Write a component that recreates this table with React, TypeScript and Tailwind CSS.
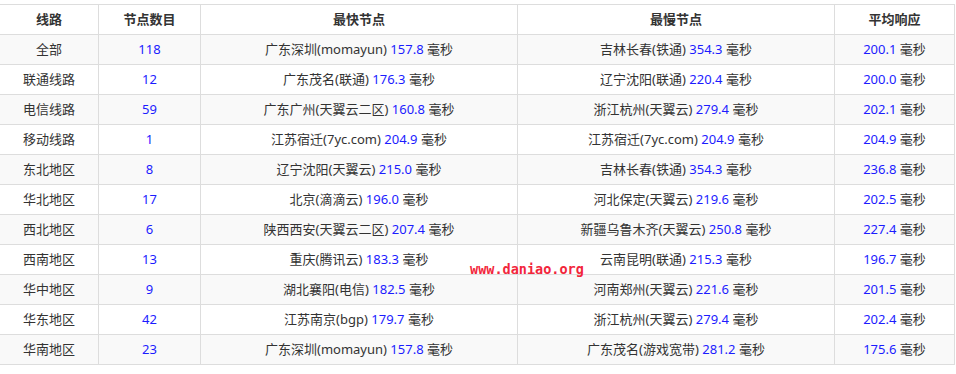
const rows = [
  ["全部", "118", "广东深圳(momayun)", "157.8", "吉林长春(铁通)", "354.3", "200.1"],
  ["联通线路", "12", "广东茂名(联通)", "176.3", "辽宁沈阳(联通)", "220.4", "200.0"],
  ["电信线路", "59", "广东广州(天翼云二区)", "160.8", "浙江杭州(天翼云)", "279.4", "202.1"],
  ["移动线路", "1", "江苏宿迁(7yc.com)", "204.9", "江苏宿迁(7yc.com)", "204.9", "204.9"],
  ["东北地区", "8", "辽宁沈阳(天翼云)", "215.0", "吉林长春(铁通)", "354.3", "236.8"],
  ["华北地区", "17", "北京(滴滴云)", "196.0", "河北保定(天翼云)", "219.6", "202.5"],
  ["西北地区", "6", "陕西西安(天翼云二区)", "207.4", "新疆乌鲁木齐(天翼云)", "250.8", "227.4"],
  ["西南地区", "13", "重庆(腾讯云)", "183.3", "云南昆明(联通)", "215.3", "196.7"],
  ["华中地区", "9", "湖北襄阳(电信)", "182.5", "河南郑州(天翼云)", "221.6", "201.5"],
  ["华东地区", "42", "江苏南京(bgp)", "179.7", "浙江杭州(天翼云)", "279.4", "202.4"],
  ["华南地区", "23", "广东深圳(momayun)", "157.8", "广东茂名(游戏宽带)", "281.2", "175.6"],
];

const cell = "h-[30px] border border-[#dddddd] text-center align-middle p-0";

function Ms({ v }: { v: string }) {
  return (
    <>
      <span className="text-[#1c1cff]">{v}</span> 毫秒
    </>
  );
}

export default function App() {
  return (
    <div
      className="relative w-[956px] h-[374px] bg-white pt-[4px] overflow-hidden text-[13px] text-[#333333]"
      style={{ fontFamily: '"Noto Sans", "Noto Sans CJK SC", sans-serif' }}
    >
      <table className="border-collapse ml-[-1px] w-[955px] table-fixed">
        <colgroup>
          <col className="w-[99px]" />
          <col className="w-[102px]" />
          <col className="w-[317px]" />
          <col className="w-[317px]" />
          <col className="w-[120px]" />
        </colgroup>
        <thead>
          <tr className="bg-white">
            <th className={cell + " font-bold"}>线路</th>
            <th className={cell + " font-bold"}>节点数目</th>
            <th className={cell + " font-bold"}>最快节点</th>
            <th className={cell + " font-bold"}>最慢节点</th>
            <th className={cell + " font-bold"}>平均响应</th>
          </tr>
        </thead>
        <tbody>
          {rows.map((r, i) => (
            <tr key={r[0]} className={i % 2 === 0 ? "bg-[#f9f9f9]" : "bg-white"}>
              <td className={cell}>{r[0]}</td>
              <td className={cell + " text-[#1c1cff]"}>{r[1]}</td>
              <td className={cell}>
                {r[2]} <Ms v={r[3]} />
              </td>
              <td className={cell}>
                {r[4]} <Ms v={r[5]} />
              </td>
              <td className={cell}>
                <Ms v={r[6]} />
              </td>
            </tr>
          ))}
        </tbody>
      </table>
      <div
        className="absolute left-[470px] top-[263px] text-[13.5px] font-bold text-[#f2263c] leading-none"
        style={{ fontFamily: '"DejaVu Sans Mono", monospace' }}
      >
        www.daniao.org
      </div>
    </div>
  );
}
